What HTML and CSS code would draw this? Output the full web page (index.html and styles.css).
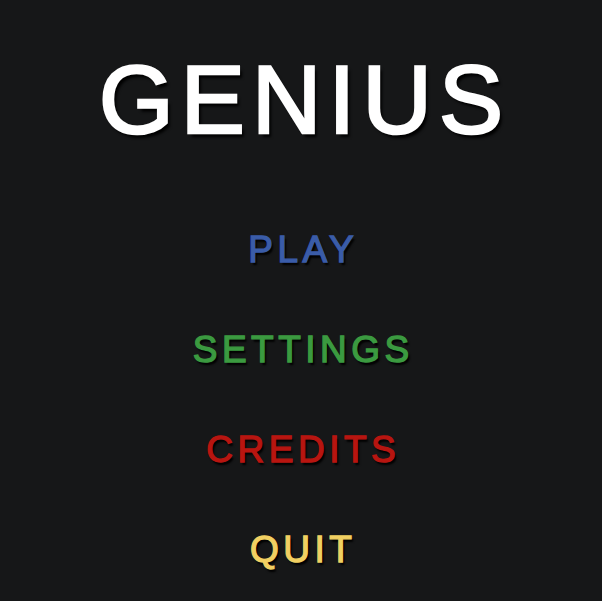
FILE: index.html
```html
<!DOCTYPE html>
<html>
<head>
<meta charset="utf-8">
<link rel="stylesheet" href="styles.css">
</head>
<body>
<main class="screen">
  <h1 class="title">GENIUS</h1>
  <nav class="menu">
    <div class="item play">PLAY</div>
    <div class="item settings">SETTINGS</div>
    <div class="item credits">CREDITS</div>
    <div class="item quit">QUIT</div>
  </nav>
</main>
</body>
</html>
```
FILE: styles.css
```css
html, body {
  margin: 0;
  padding: 0;
  background: #161718;
  width: 602px;
  height: 601px;
  overflow: hidden;
}
.screen {
  display: flex;
  flex-direction: column;
  align-items: center;
  font-family: "Liberation Sans", Arial, sans-serif;
  font-weight: normal;
}
.title {
  margin: 0;
  height: 200px;
  display: flex;
  align-items: center;
  justify-content: center;
  font-size: 96px;
  font-weight: normal;
  letter-spacing: 7.2px;
  padding-left: 7.2px;
  color: #ffffff;
  -webkit-text-stroke: 2.6px #ffffff;
  text-shadow: 3px 4px 3px #000;
}
.menu {
  display: flex;
  flex-direction: column;
  align-items: center;
}
.item {
  height: 100px;
  display: flex;
  align-items: center;
  justify-content: center;
  font-size: 37px;
  letter-spacing: 4.5px;
  padding-left: 4.5px;
  -webkit-text-stroke: 1.3px currentColor;
  text-shadow: 2px 3px 2px #000;
}
.play { color: #3a5ca8; }
.settings { color: #3b9a40; }
.credits { color: #b81510; }
.quit { color: #f1d062; }
```
